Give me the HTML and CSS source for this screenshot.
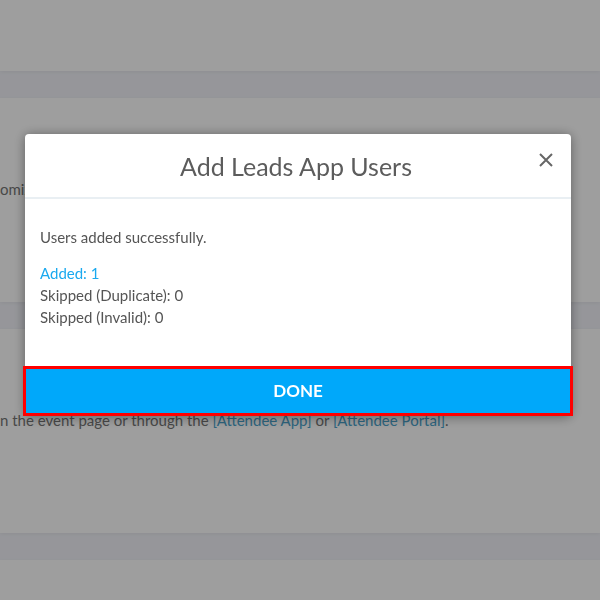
FILE: index.html
```
<!DOCTYPE html>
<html lang="en">
<head>
<meta charset="utf-8">
<meta name="viewport" content="width=device-width, initial-scale=1">
<title>Add Leads App Users</title>
<link rel="stylesheet" href="styles.css">
</head>
<body>
<main class="page">
  <section class="panel panel-first"></section>
  <section class="panel"><p>omiz</p></section>
  <section class="panel"><p>n the event page or through the <a href="#app">[Attendee App]</a> or <a href="#portal">[Attendee Portal]</a>.</p></section>
  <section class="panel panel-last"></section>
</main>
<div class="overlay">
  <div class="modal" role="dialog" aria-modal="true" aria-labelledby="modal-title">
    <header class="modal-header">
      <h1 id="modal-title">Add Leads App Users</h1>
      <button class="close" type="button" aria-label="Close">
        <svg viewBox="0 0 14 14" width="14" height="14" aria-hidden="true"><path d="M1 1l12 12M13 1L1 13"/></svg>
      </button>
    </header>
    <div class="modal-body">
      <p class="message">Users added successfully.</p>
      <p class="added">Added: 1</p>
      <p>Skipped (Duplicate): 0</p>
      <p>Skipped (Invalid): 0</p>
    </div>
    <button class="done" type="button">DONE</button>
  </div>
</div>
</body>
</html>
```
FILE: styles.css
```
* {
  box-sizing: border-box;
}

body {
  margin: 0;
  background: #f2f3f9;
  color: #555;
  font: 15px/22px Lato, "Open Sans", sans-serif;
}

h1,
p {
  margin: 0;
}

.page {
  display: flex;
  flex-direction: column;
  gap: 27px;
  min-height: 100vh;
}

.panel {
  min-height: 204px;
  padding-top: 80px;
  background: #fff;
  box-shadow: 0 1px 4px rgba(0, 0, 0, 0.06);
  color: #757575;
}

.panel-first {
  min-height: 71px;
  padding: 0;
}

.panel-last {
  flex: 1;
  min-height: 0;
  padding: 0;
}

.panel a {
  color: #4aa3cc;
  text-decoration: none;
}

.overlay {
  position: fixed;
  inset: 0;
  padding: 134px 29px 0 25px;
  background: rgba(0, 0, 0, 0.38);
}

.modal {
  border-radius: 4px;
  background: #fff;
  box-shadow: 0 1px 12px rgba(0, 0, 0, 0.4);
}

.modal-header {
  display: grid;
  grid-template-columns: 32px 1fr 32px;
  align-items: center;
  height: 65px;
  padding: 0 9px 0 5px;
  border-bottom: 2px solid #e9eff3;
}

.modal-header h1 {
  grid-column: 2;
  color: #5c5c5c;
  font-size: 25px;
  font-weight: 400;
  line-height: 32px;
  text-align: center;
}

.close {
  display: grid;
  place-items: center;
  width: 32px;
  height: 32px;
  margin-bottom: 12px;
  padding: 0;
  border: 0;
  background: none;
}

.close svg {
  fill: none;
  stroke: #666;
  stroke-width: 2;
}

.modal-body {
  padding: 27px 15px 38px;
}

.message {
  margin-bottom: 14px;
}

.added {
  color: #1aa9ef;
}

.done {
  display: block;
  width: calc(100% + 4px);
  height: 50px;
  margin: 0 -2px;
  padding: 0;
  border: 3px solid #f00;
  background: #00a8fa;
  color: #fff;
  font: 700 17px/22px Lato, "Open Sans", sans-serif;
}
```
